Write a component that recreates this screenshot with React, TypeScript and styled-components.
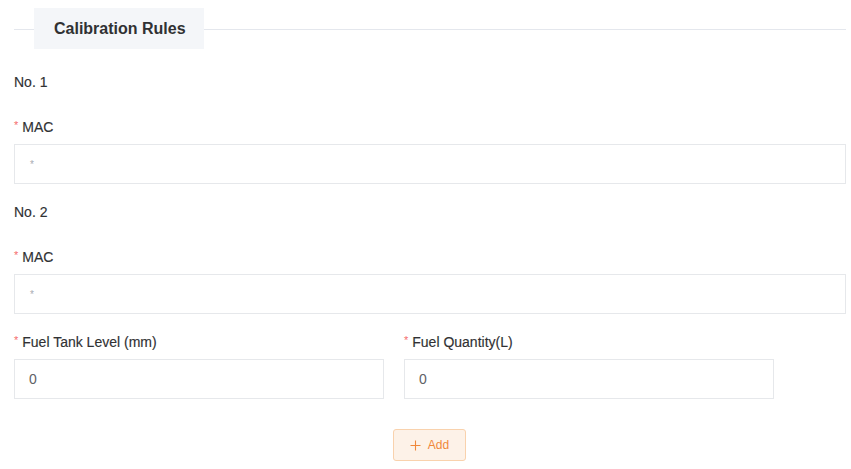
import React from "react";
import styled, { createGlobalStyle } from "styled-components";

const Global = createGlobalStyle`
  html, body { margin: 0; padding: 0; background: #ffffff; }
  body { font-family: "Liberation Sans", Arial, sans-serif; color: #303133; }
  * { box-sizing: border-box; }
`;

const Page = styled.div`
  width: 851px;
  padding: 8px 5px 0 14px;
`;

const Header = styled.div`
  display: flex;
  align-items: center;
  height: 41px;
`;

const HeaderLine = styled.div<{ $grow?: boolean }>`
  height: 1px;
  background: #e4e7ed;
  margin-top: 1px;
  ${(p) => (p.$grow ? "flex: 1;" : "width: 20px;")}
`;

const HeaderTab = styled.div`
  height: 41px;
  width: 170px;
  padding: 0 20px;
  background: #f4f6f9;
  display: flex;
  align-items: center;
  font-size: 16px;
  font-weight: 700;
  color: #303133;
  white-space: nowrap;
`;

const GroupTitle = styled.div<{ $top: number }>`
  margin-top: ${(p) => p.$top}px;
  font-size: 14px;
  line-height: 20px;
  color: #303133;
  -webkit-text-stroke: 0.15px #303133;
`;

const Label = styled.div`
  font-size: 14px;
  line-height: 20px;
  color: #303133;
  display: flex;
  align-items: center;
  -webkit-text-stroke: 0.15px #303133;
`;

const Star = styled.span`
  color: #f56c6c;
  font-size: 11px;
  margin-right: 4px;
  position: relative;
  top: -2px;
  -webkit-text-stroke: 0;
`;

const Field = styled.div<{ $width?: number }>`
  margin-top: 25px;
  display: flex;
  flex-direction: column;
  gap: 7px;
  ${(p) => (p.$width ? `width: ${p.$width}px;` : "width: 100%;")}
`;

const Input = styled.div<{ $placeholder?: boolean }>`
  height: 40px;
  border: 1px solid #e6e8eb;
  background: #fff;
  padding-left: ${(p) => (p.$placeholder ? 15 : 14)}px;
  display: flex;
  align-items: center;
  font-size: ${(p) => (p.$placeholder ? 10 : 14)}px;
  color: ${(p) => (p.$placeholder ? "#a8abb2" : "#606266")};
`;

const Row = styled.div`
  display: flex;
  gap: 20px;
  & > ${Field} {
    margin-top: 18px;
  }
`;

const ButtonWrap = styled.div`
  display: flex;
  justify-content: center;
  margin-top: 30px;
`;

const AddButton = styled.button`
  width: 73px;
  height: 32px;
  border: 1px solid #f9d2ad;
  background: #fdf2e8;
  color: #f0883a;
  border-radius: 3px;
  font-family: "Liberation Sans", Arial, sans-serif;
  font-size: 12px;
  display: flex;
  align-items: center;
  justify-content: center;
  gap: 7px;
  padding: 0;
  margin-right: 1px;
`;

const MacField = ({ top }: { top: number }) => (
  <Field style={{ marginTop: top }}>
    <Label>
      <Star>*</Star>MAC
    </Label>
    <Input $placeholder>*</Input>
  </Field>
);

export default function App() {
  return (
    <>
      <Global />
      <Page>
        <Header>
          <HeaderLine />
          <HeaderTab>Calibration Rules</HeaderTab>
          <HeaderLine $grow />
        </Header>
        <GroupTitle $top={23}>No. 1</GroupTitle>
        <MacField top={25} />
        <GroupTitle $top={18}>No. 2</GroupTitle>
        <MacField top={25} />
        <Row>
          <Field $width={370}>
            <Label>
              <Star>*</Star>Fuel Tank Level (mm)
            </Label>
            <Input>0</Input>
          </Field>
          <Field $width={370}>
            <Label>
              <Star>*</Star>Fuel Quantity(L)
            </Label>
            <Input>0</Input>
          </Field>
        </Row>
        <ButtonWrap>
          <AddButton>
            <svg width="11" height="11" viewBox="0 0 11 11" fill="none">
              <path d="M5.5 0.5V10.5M0.5 5.5H10.5" stroke="#f0883a" strokeWidth="1.1" />
            </svg>
            Add
          </AddButton>
        </ButtonWrap>
      </Page>
    </>
  );
}
